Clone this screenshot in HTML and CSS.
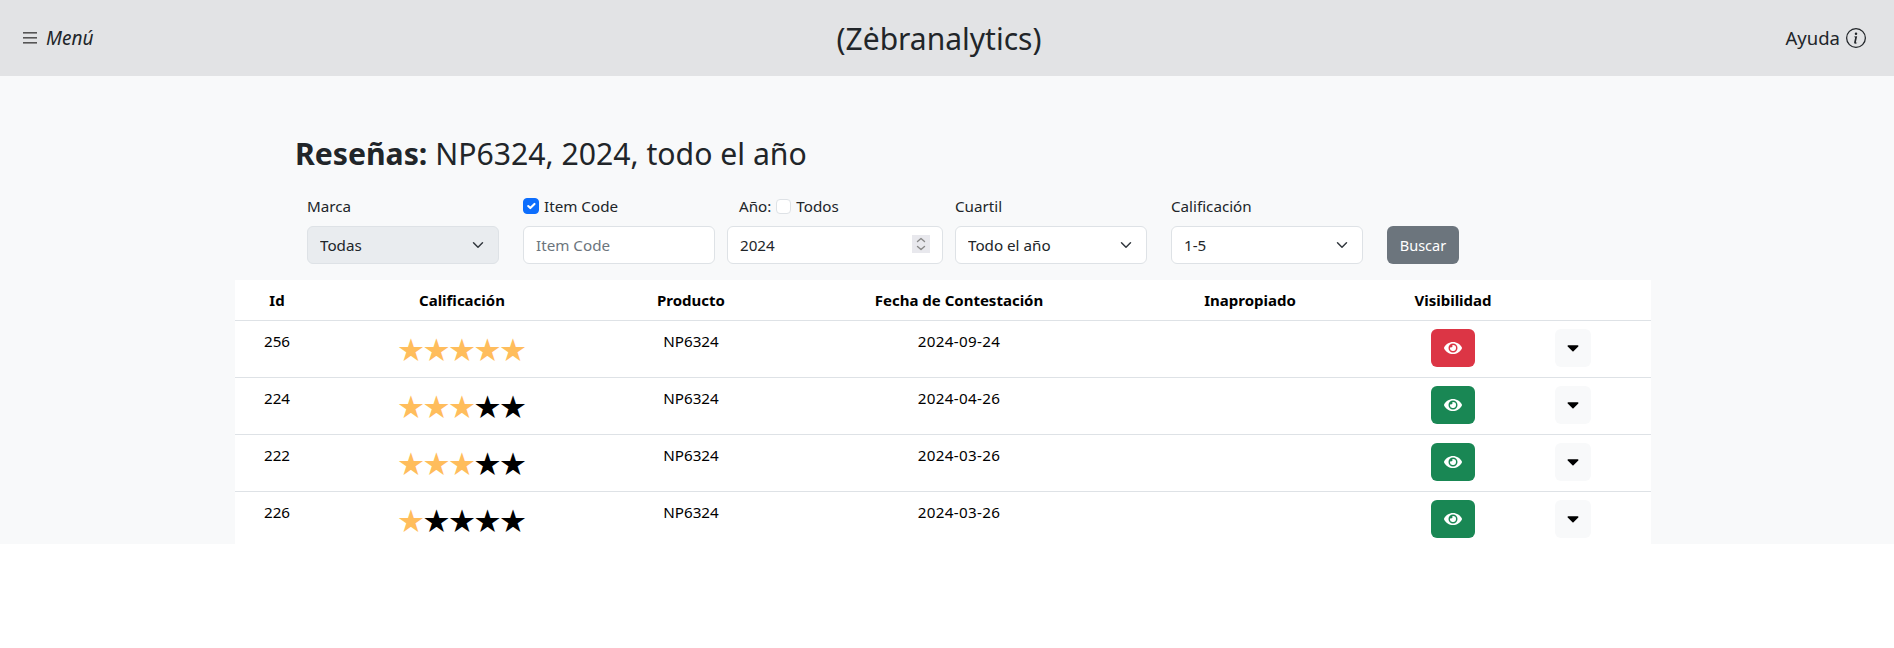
FILE: index.html
```html
<!DOCTYPE html>
<html lang="es">
<head>
  <meta charset="UTF-8" />
  <meta name="viewport" content="width=device-width, initial-scale=1.0"/>
  <title>Zebranalytics</title>
  <link rel="stylesheet" href="styles.css">
</head>
<body>
  <header class="topbar">
    <a class="menu-link">
      <svg class="menu-icon" viewBox="0 0 14 12"><rect y="0" width="14" height="1.6"/><rect y="5" width="14" height="1.6"/><rect y="10" width="14" height="1.6"/></svg>
      <em>Menú</em>
    </a>
    <div class="brand">(Zėbranalytics)</div>
    <a class="help-link">
      Ayuda
      <svg class="help-icon" viewBox="0 0 16 16"><path d="M8 15A7 7 0 1 1 8 1a7 7 0 0 1 0 14zm0 1A8 8 0 1 0 8 0a8 8 0 0 0 0 16z"/><path d="m8.93 6.588-2.29.287-.082.38.45.083c.294.07.352.176.288.469l-.738 3.468c-.194.897.105 1.319.808 1.319.545 0 1.178-.252 1.465-.598l.088-.42c-.2.176-.492.246-.686.246-.275 0-.375-.193-.304-.533L8.93 6.588zM9 4.5a1 1 0 1 1-2 0 1 1 0 0 1 2 0z"/></svg>
    </a>
  </header>

  <main class="content">
    <h2 class="page-title"><strong>Reseñas:</strong> NP6324, 2024, todo el año</h2>

    <form class="filters">
      <div class="field">
        <label class="field-label">Marca</label>
        <select class="control select" disabled><option>Todas</option></select>
      </div>
      <div class="field">
        <label class="field-label"><input type="checkbox" class="check" checked> Item Code</label>
        <input type="text" class="control" placeholder="Item Code">
      </div>
      <div class="field field-year">
        <label class="field-label">Año: <input type="checkbox" class="check check-small"> Todos</label>
        <input type="number" class="control" value="2024">
      </div>
      <div class="field">
        <label class="field-label">Cuartil</label>
        <select class="control select"><option>Todo el año</option></select>
      </div>
      <div class="field">
        <label class="field-label">Calificación</label>
        <select class="control select"><option>1-5</option></select>
      </div>
      <button type="button" class="btn-search">Buscar</button>
    </form>

    <table class="reviews">
      <colgroup>
        <col class="col-id"><col class="col-rating"><col class="col-product"><col class="col-date"><col class="col-flag"><col class="col-visible"><col class="col-more">
      </colgroup>
      <thead>
        <tr><th>Id</th><th>Calificación</th><th>Producto</th><th>Fecha de Contestación</th><th>Inapropiado</th><th>Visibilidad</th><th></th></tr>
      </thead>
      <tbody>
        <tr>
          <td>256</td>
          <td class="stars"><span class="on">★★★★★</span></td>
          <td>NP6324</td>
          <td class="date">2024-09-24</td>
          <td></td>
          <td><button class="btn-eye red"><svg viewBox="0 0 576 512"><path d="M572.52 241.4C518.29 135.59 410.93 64 288 64S57.68 135.64 3.48 241.41a32.35 32.35 0 0 0 0 29.19C57.71 376.41 165.07 448 288 448s230.32-71.64 284.52-177.41a32.35 32.35 0 0 0 0-29.19zM288 400a144 144 0 1 1 144-144 143.93 143.93 0 0 1-144 144zm0-240a95.31 95.31 0 0 0-25.31 3.79 47.85 47.85 0 0 1-66.9 66.9A95.78 95.78 0 1 0 288 160z"/></svg></button></td>
          <td class="more"><button class="btn-more"><svg viewBox="0 0 320 512"><path d="M31.3 192h257.3c17.8 0 26.7 21.5 14.1 34.1L174.1 354.8c-7.8 7.8-20.5 7.8-28.3 0L17.2 226.1C4.6 213.5 13.5 192 31.3 192z"/></svg></button></td>
        </tr>
        <tr>
          <td>224</td>
          <td class="stars"><span class="on">★★★</span>★★</td>
          <td>NP6324</td>
          <td class="date">2024-04-26</td>
          <td></td>
          <td><button class="btn-eye green"><svg viewBox="0 0 576 512"><path d="M572.52 241.4C518.29 135.59 410.93 64 288 64S57.68 135.64 3.48 241.41a32.35 32.35 0 0 0 0 29.19C57.71 376.41 165.07 448 288 448s230.32-71.64 284.52-177.41a32.35 32.35 0 0 0 0-29.19zM288 400a144 144 0 1 1 144-144 143.93 143.93 0 0 1-144 144zm0-240a95.31 95.31 0 0 0-25.31 3.79 47.85 47.85 0 0 1-66.9 66.9A95.78 95.78 0 1 0 288 160z"/></svg></button></td>
          <td class="more"><button class="btn-more"><svg viewBox="0 0 320 512"><path d="M31.3 192h257.3c17.8 0 26.7 21.5 14.1 34.1L174.1 354.8c-7.8 7.8-20.5 7.8-28.3 0L17.2 226.1C4.6 213.5 13.5 192 31.3 192z"/></svg></button></td>
        </tr>
        <tr>
          <td>222</td>
          <td class="stars"><span class="on">★★★</span>★★</td>
          <td>NP6324</td>
          <td class="date">2024-03-26</td>
          <td></td>
          <td><button class="btn-eye green"><svg viewBox="0 0 576 512"><path d="M572.52 241.4C518.29 135.59 410.93 64 288 64S57.68 135.64 3.48 241.41a32.35 32.35 0 0 0 0 29.19C57.71 376.41 165.07 448 288 448s230.32-71.64 284.52-177.41a32.35 32.35 0 0 0 0-29.19zM288 400a144 144 0 1 1 144-144 143.93 143.93 0 0 1-144 144zm0-240a95.31 95.31 0 0 0-25.31 3.79 47.85 47.85 0 0 1-66.9 66.9A95.78 95.78 0 1 0 288 160z"/></svg></button></td>
          <td class="more"><button class="btn-more"><svg viewBox="0 0 320 512"><path d="M31.3 192h257.3c17.8 0 26.7 21.5 14.1 34.1L174.1 354.8c-7.8 7.8-20.5 7.8-28.3 0L17.2 226.1C4.6 213.5 13.5 192 31.3 192z"/></svg></button></td>
        </tr>
        <tr>
          <td>226</td>
          <td class="stars"><span class="on">★</span>★★★★</td>
          <td>NP6324</td>
          <td class="date">2024-03-26</td>
          <td></td>
          <td><button class="btn-eye green"><svg viewBox="0 0 576 512"><path d="M572.52 241.4C518.29 135.59 410.93 64 288 64S57.68 135.64 3.48 241.41a32.35 32.35 0 0 0 0 29.19C57.71 376.41 165.07 448 288 448s230.32-71.64 284.52-177.41a32.35 32.35 0 0 0 0-29.19zM288 400a144 144 0 1 1 144-144 143.93 143.93 0 0 1-144 144zm0-240a95.31 95.31 0 0 0-25.31 3.79 47.85 47.85 0 0 1-66.9 66.9A95.78 95.78 0 1 0 288 160z"/></svg></button></td>
          <td class="more"><button class="btn-more"><svg viewBox="0 0 320 512"><path d="M31.3 192h257.3c17.8 0 26.7 21.5 14.1 34.1L174.1 354.8c-7.8 7.8-20.5 7.8-28.3 0L17.2 226.1C4.6 213.5 13.5 192 31.3 192z"/></svg></button></td>
        </tr>
      </tbody>
    </table>
  </main>
</body>
</html>
```

FILE: styles.css
```css
:root {
  --text: #212529;
  --light: #f8f9fa;
  --border: #dee2e6;
}

* {
  box-sizing: border-box;
  font-family: "Noto Sans", sans-serif;
}

html, body {
  margin: 0;
  padding: 0;
  background: #fff;
  color: var(--text);
}

/* barra superior */
.topbar {
  display: grid;
  grid-template-columns: 1fr auto 1fr;
  align-items: center;
  height: 76px;
  padding: 0 28px 0 23px;
  background: #e2e3e5;
}

.menu-link {
  display: flex;
  align-items: center;
  gap: 9px;
  font-size: 19px;
}

.menu-icon {
  width: 14px;
  height: 12px;
  fill: #555;
}

.brand {
  margin-right: 11px;
  font-size: 30px;
  line-height: 1.2;
  padding-top: 2px;
}

.help-link {
  display: flex;
  align-items: center;
  justify-content: flex-end;
  gap: 6px;
  padding-bottom: 1px;
  font-size: 18.5px;
}

.help-icon {
  width: 20px;
  height: 20px;
  fill: var(--text);
}

/* contenido */
.content {
  height: 468px;
  padding: 58px 243px 0 235px;
  background: var(--light);
  overflow: hidden;
}

.page-title {
  margin: 0 0 20px 60px;
  font-size: 30.2px;
  font-weight: 400;
  line-height: 40px;
}

.page-title strong {
  font-weight: 700;
}

.filters {
  display: flex;
  align-items: flex-end;
  margin-left: 72px;
  margin-bottom: 16px;
}

.field {
  width: 192px;
  margin-right: 24px;
}

.field-year {
  width: 216px;
  margin-left: -12px;
  margin-right: 12px;
}

.field-year .field-label {
  padding-left: 12px;
}

.field-label {
  display: flex;
  align-items: center;
  gap: 5px;
  height: 24px;
  margin-bottom: 8px;
  font-size: 15.2px;
}

.check {
  appearance: none;
  flex: none;
  width: 16px;
  height: 16px;
  margin: 0;
  border: 1px solid var(--border);
  border-radius: 4px;
  background: #fff;
}

.check-small {
  width: 15px;
  height: 15px;
}

.check:checked {
  border-color: #0d6efd;
  background-color: #0d6efd;
  background-image: url("data:image/svg+xml,%3csvg xmlns='http://www.w3.org/2000/svg' viewBox='0 0 20 20'%3e%3cpath fill='none' stroke='%23fff' stroke-linecap='round' stroke-linejoin='round' stroke-width='3' d='m6 10 3 3 6-6'/%3e%3c/svg%3e");
}

.control {
  display: block;
  width: 100%;
  height: 38px;
  padding: 0 12px;
  border: 1px solid var(--border);
  border-radius: 6px;
  background-color: #fff;
  color: var(--text);
  font-size: 15.2px;
  opacity: 1;
}

.control::placeholder {
  color: #6c757d;
}

.control::-webkit-inner-spin-button {
  -webkit-appearance: none;
  opacity: 1;
  width: 18px;
  height: 18px;
  background: #e8e8ed url("data:image/svg+xml,%3csvg xmlns='http://www.w3.org/2000/svg' viewBox='0 0 18 18'%3e%3cpath fill='none' stroke='%23888' stroke-width='1.4' stroke-linecap='round' stroke-linejoin='round' d='m5.5 6.5 3.5-3 3.5 3M5.5 11.5l3.5 3 3.5-3'/%3e%3c/svg%3e") no-repeat center;
}

.select {
  appearance: none;
  background-image: url("data:image/svg+xml,%3csvg xmlns='http://www.w3.org/2000/svg' viewBox='0 0 16 16'%3e%3cpath fill='none' stroke='%23343a40' stroke-linecap='round' stroke-linejoin='round' stroke-width='2' d='m2 5 6 6 6-6'/%3e%3c/svg%3e");
  background-repeat: no-repeat;
  background-position: right 12px center;
  background-size: 16px 12px;
}

.select:disabled {
  background-color: #e9ecef;
}

.btn-search {
  width: 72px;
  height: 38px;
  padding: 0;
  border: none;
  border-radius: 6px;
  background: #6c757d;
  color: #fff;
  font-size: 14.5px;
}

/* tabla */
.reviews {
  width: 1416px;
  border-collapse: collapse;
  table-layout: fixed;
  background: #fff;
  color: #000;
  font-size: 15.2px;
}

.col-id { width: 84px; }
.col-rating { width: 286px; }
.col-product { width: 172px; }
.col-date { width: 364px; }
.col-flag { width: 218px; }
.col-visible { width: 188px; }
.col-more { width: 104px; }

.reviews th {
  height: 40px;
  padding: 0 8px;
  border-bottom: 1px solid var(--border);
  font-size: 15px;
  font-weight: 700;
  text-align: center;
}

.reviews td {
  height: 57px;
  padding: 8px;
  border-bottom: 1px solid var(--border);
  text-align: center;
  vertical-align: top;
  line-height: 24px;
}

.reviews td.date {
  letter-spacing: 0.3px;
}

.reviews td.more {
  text-align: left;
}

.reviews td.stars {
  padding: 5px 0 0;
  font-family: "Noto Sans CJK SC", sans-serif;
  font-size: 25.5px;
  line-height: 44px;
}

.stars .on {
  font-family: inherit;
  color: #ffbd5c;
}

.btn-eye, .btn-more {
  display: inline-flex;
  align-items: center;
  justify-content: center;
  height: 38px;
  padding: 0;
  border: none;
  border-radius: 6px;
  vertical-align: top;
}

.btn-eye {
  width: 44px;
}

.btn-eye svg {
  width: 18px;
  height: 16px;
  fill: #fff;
}

.btn-more {
  width: 36px;
  background: var(--light);
}

.btn-more svg {
  width: 12px;
  height: 19px;
  fill: #000;
}

.red { background: #dc3545; }
.green { background: #198754; }
```
